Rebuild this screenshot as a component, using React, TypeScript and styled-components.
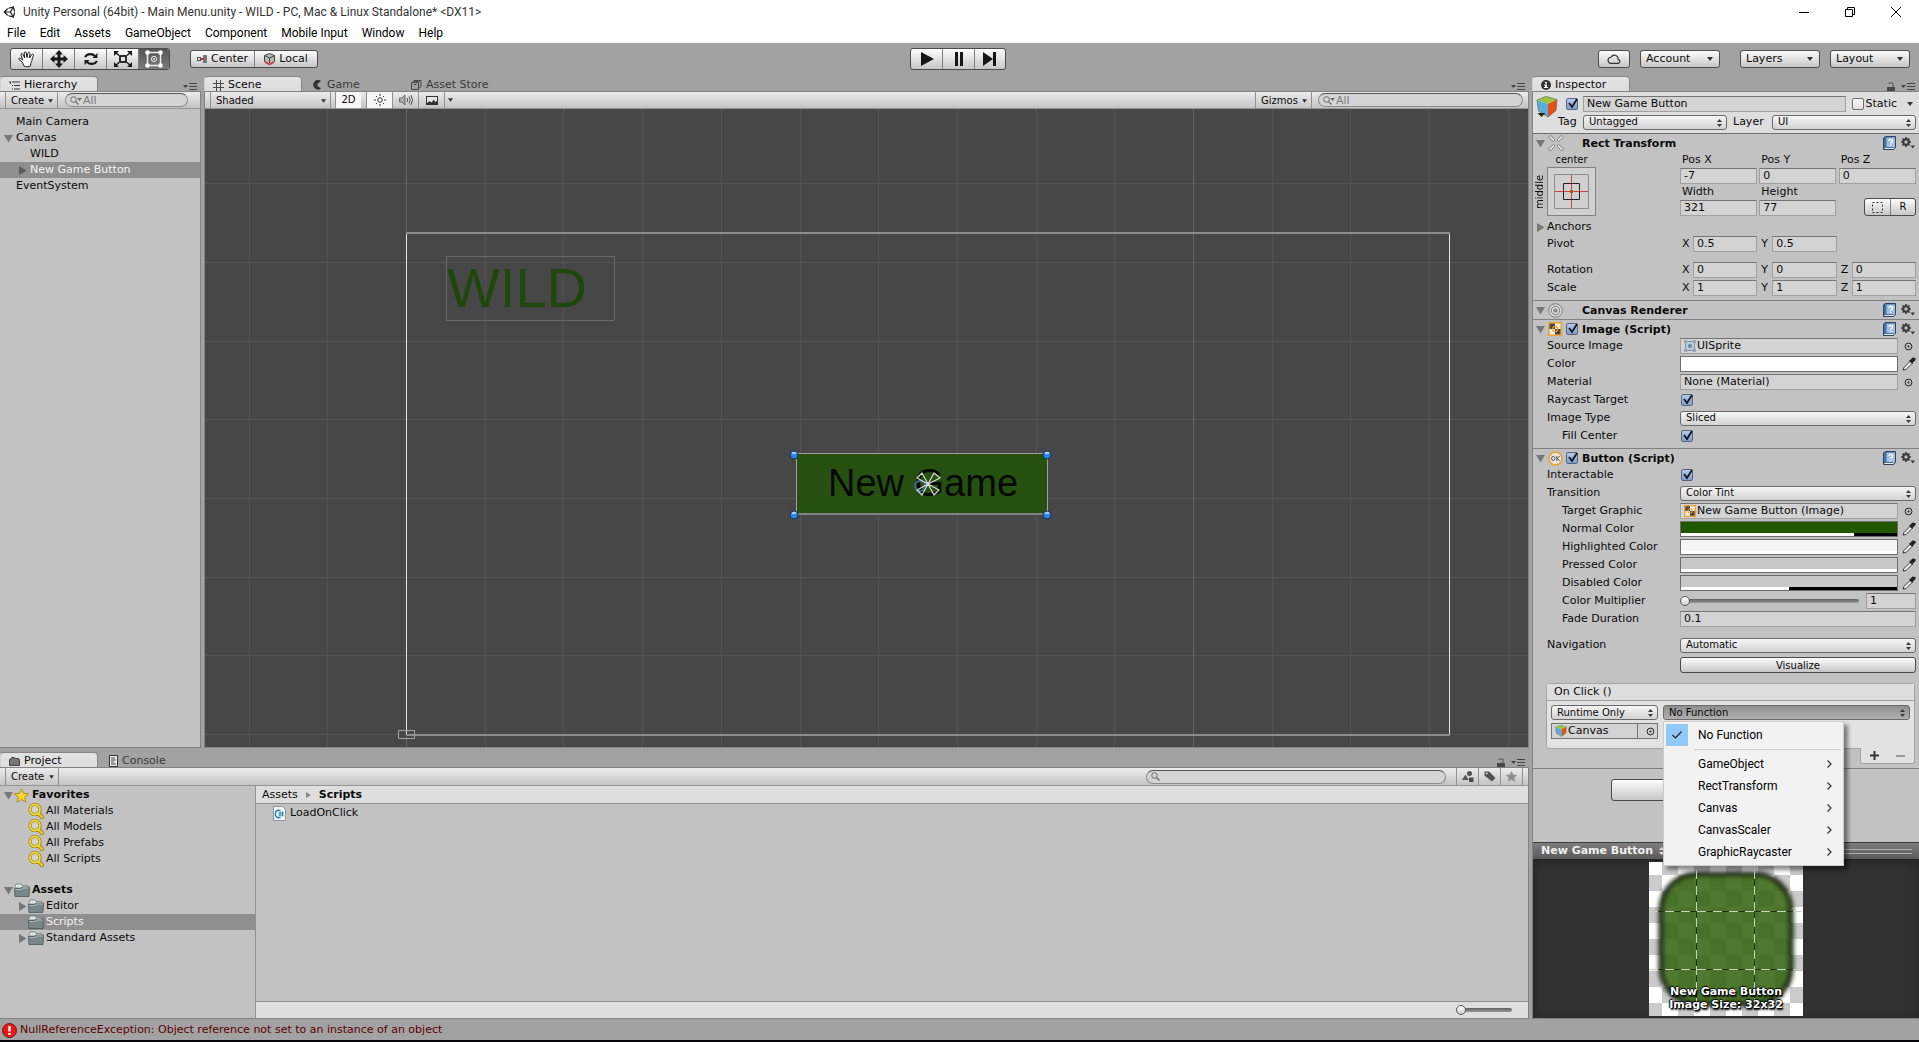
import React, { useState } from 'react';
import styled, { createGlobalStyle, css } from 'styled-components';
import { FaUnity } from 'react-icons/fa';

const line = '#828282';
const chrome = '#a2a2a2';
const panel = '#c2c2c2';
const bright = '#dedede';
const selected = '#8f8f8f';

const GlobalStyle = createGlobalStyle`
  * { box-sizing: border-box; }
  body {
    margin: 0;
    background: ${chrome};
    color: #0a0a0a;
    font-family: "DejaVu Sans", Verdana, sans-serif;
    font-size: 11px;
    line-height: 16px;
    overflow: hidden;
  }
  button, input, select { font: inherit; color: inherit; margin: 0; }
  button { padding: 0; border: 0; background: none; }
  ul { list-style: none; margin: 0; padding: 0; }
  svg { display: block; flex: none; }
`;

const Shell = styled.div`
  display: flex;
  flex-direction: column;
  height: 100vh;
`;

/* ---------- window chrome ---------- */

const TitleBar = styled.header`
  display: flex;
  align-items: center;
  height: 24px;
  padding-left: 3px;
  gap: 6px;
  background: #fff;
  font: 12px/16px Roboto, "Segoe UI", sans-serif;
  color: #333;
`;
const WindowButtons = styled.div`
  display: flex;
  margin-left: auto;
`;
const WindowButton = styled.button`
  width: 46px;
  height: 20px;
  display: grid;
  place-items: center;
`;
const MenuBar = styled.nav`
  display: flex;
  align-items: center;
  height: 19px;
  padding-left: 7px;
  gap: 14px;
  background: #fff;
  border-bottom: 1px solid #f0f0f0;
  button {
    font: 12px/16px Roboto, "Segoe UI", sans-serif;
    color: #000;
  }
`;

const raised = css`
  background: linear-gradient(#fdfdfd, #c6c6c6);
  border: 1px solid #4c4c4c;
  border-radius: 3px;
`;
const MainToolbar = styled.div`
  display: grid;
  grid-template-columns: 1fr auto 1fr;
  height: 33px;
  padding: 5px 9px 0 10px;
`;
const ToolGroup = styled.div`
  display: flex;
  align-items: flex-start;
`;
const Playback = styled(ToolGroup)`
  padding-right: 4px;
`;
const Segments = styled.div<{ $h: number }>`
  display: flex;
  height: ${p => p.$h}px;
  overflow: hidden;
  ${raised}
`;
const Segment = styled.button<{ $w: number; $on?: boolean }>`
  width: ${p => p.$w}px;
  display: flex;
  align-items: center;
  justify-content: center;
  gap: 4px;
  ${p => p.$on && 'background: linear-gradient(#555, #7b7b7b);'}
  & + & { border-left: 1px solid #808080; }
`;
const HandleModes = styled(Segments)`
  margin: 2px 0 0 20px;
`;
const RightTools = styled.div`
  display: flex;
  justify-content: flex-end;
  align-items: flex-start;
  padding-top: 2px;
`;
const CloudButton = styled.button`
  width: 32px;
  height: 18px;
  display: grid;
  place-items: center;
  margin-right: 10px;
  ${raised}
`;
const MenuButton = styled.button<{ $gap?: number }>`
  width: 80px;
  height: 18px;
  display: flex;
  align-items: center;
  justify-content: space-between;
  padding: 0 6px 0 5px;
  margin-right: ${p => p.$gap ?? 0}px;
  ${raised}
`;

/* ---------- docked panels ---------- */

const Workspace = styled.main`
  flex: 1;
  min-height: 0;
  display: grid;
  grid-template-columns: minmax(0, 1fr) 387px;
  column-gap: 3px;
`;
const LeftSide = styled.div`
  display: flex;
  flex-direction: column;
  gap: 4px;
  min-height: 0;
`;
const UpperDock = styled.div`
  flex: 1;
  min-height: 0;
  display: grid;
  grid-template-columns: 201px minmax(0, 1fr);
  column-gap: 3px;
`;
const Dock = styled.section<{ $h?: number }>`
  display: flex;
  flex-direction: column;
  min-height: 0;
  ${p => p.$h && `height: ${p.$h}px;`}
`;
const TabBar = styled.div`
  display: flex;
  height: 15px;
  flex: none;
`;
const Tab = styled.button<{ $on?: boolean }>`
  width: 98px;
  height: 15px;
  display: flex;
  align-items: center;
  gap: 4px;
  padding: 2px 0 0 ${p => (p.$on ? 8 : 11)}px;
  white-space: nowrap;
  color: ${p => (p.$on ? '#0a0a0a' : '#3a3a3a')};
  ${p =>
    p.$on &&
    `background: linear-gradient(#e2e2e2, #dedede);
     border: 1px solid #868686; border-bottom: 0; border-left-color: #d0d0d0;
     border-radius: 4px 4px 0 0;`}
`;
const TabTools = styled.div`
  display: flex;
  align-items: center;
  gap: 6px;
  margin-left: auto;
  padding: 6px 4px 0 0;
`;
const Frame = styled.div<{ $left?: boolean; $right?: boolean }>`
  flex: 1;
  min-height: 0;
  display: flex;
  flex-direction: column;
  background: ${panel};
  border: 0 solid ${line};
  border-top-width: 1px;
  border-left-width: ${p => (p.$left ? 1 : 0)}px;
  border-right-width: ${p => (p.$right ? 1 : 0)}px;
  border-bottom-width: 1px;
`;
const Toolbar = styled.div<{ $h: number }>`
  display: flex;
  align-items: stretch;
  flex: none;
  height: ${p => p.$h}px;
  padding-left: 5px;
  background: linear-gradient(#ececec, #c4c4c4);
  border-bottom: 1px solid #969696;
  font-size: 10px;
`;
const ToolItem = styled.button<{ $w: number; $on?: boolean; $first?: boolean }>`
  width: ${p => p.$w}px;
  display: flex;
  align-items: center;
  justify-content: ${p => (p.$first ? 'space-between' : 'center')};
  padding: ${p => (p.$first ? '1px 4px 0 5px' : '0')};
  border-left: 1px solid #909090;
  border-right: ${p => (p.$first ? 1 : 0)}px solid #909090;
  ${p => p.$on && 'background: #f6f6f6;'}
`;
const Gap = styled.span<{ $w?: number }>`
  ${p => (p.$w ? `width: ${p.$w}px;` : 'flex: 1;')}
`;
const SearchBox = styled.label<{ $w: number; $h: number }>`
  width: ${p => p.$w}px;
  height: ${p => p.$h}px;
  align-self: center;
  display: flex;
  align-items: center;
  gap: 1px;
  padding: 0 5px 0 4px;
  border: 1px solid #8c8c8c;
  border-top-color: #555;
  border-radius: 8px;
  background: #d4d4d4;
  input {
    min-width: 0;
    flex: 1;
    height: 100%;
    border: 0;
    padding: 0;
    outline: 0;
    background: none;
    font-size: 11px;
    color: #7c7c7c;
  }
  input::placeholder { color: #7c7c7c; opacity: 1; }
`;

/* ---------- trees ---------- */

const Tree = styled.ul<{ $top: number }>`
  padding-top: ${p => p.$top}px;
`;
const Node = styled.li<{ $depth: number; $on?: boolean; $bold?: boolean; $space?: boolean }>`
  display: flex;
  align-items: center;
  height: 16px;
  padding-left: ${p => 4 + p.$depth * 14}px;
  margin-top: ${p => (p.$space ? 15 : 0)}px;
  background: ${p => (p.$on ? selected : 'none')};
  color: ${p => (p.$on ? '#f4f4f4' : '#0a0a0a')};
  font-weight: ${p => (p.$bold ? 700 : 400)};
  white-space: nowrap;
`;
const Fold = styled.span`
  width: 10px;
  flex: none;
`;
const NodeText = styled.span<{ $gap: number }>`
  padding-left: ${p => p.$gap}px;
`;

/* ---------- scene ---------- */

const SceneView = styled.div`
  position: relative;
  flex: 1;
  min-height: 0;
  overflow: hidden;
  background: #474747;
`;
const SceneDrawing = styled.svg`
  position: absolute;
  inset: 0;
  width: 100%;
  height: 100%;
`;
const SceneText = styled.div<{ $x: number; $y: number; $w: number; $h: number; $size: number; $color: string; $center?: boolean }>`
  position: absolute;
  left: ${p => p.$x}px;
  top: ${p => p.$y}px;
  width: ${p => p.$w}px;
  height: ${p => p.$h}px;
  font: ${p => p.$size}px/${p => p.$h}px "Liberation Sans", Arial, sans-serif;
  color: ${p => p.$color};
  text-align: ${p => (p.$center ? 'center' : 'left')};
`;

/* ---------- project ---------- */

const ProjectBody = styled.div`
  flex: 1;
  min-height: 0;
  display: grid;
  grid-template-columns: 256px minmax(0, 1fr);
`;
const ProjectTree = styled.div`
  border-right: 1px solid #909090;
`;
const ProjectFiles = styled.div`
  display: flex;
  flex-direction: column;
`;
const Breadcrumb = styled.div`
  display: flex;
  align-items: center;
  gap: 8px;
  height: 18px;
  padding-left: 6px;
  background: ${bright};
  border-bottom: 1px solid #909090;
`;
const FileRow = styled.div`
  display: flex;
  align-items: center;
  gap: 4px;
  height: 18px;
  padding-left: 17px;
`;
const SizeBar = styled.div`
  display: flex;
  align-items: center;
  justify-content: flex-end;
  height: 17px;
  margin-top: auto;
  padding-right: 16px;
  background: ${bright};
  border-top: 1px solid #909090;
`;
const Slider = styled.input<{ $w?: number }>`
  appearance: none;
  height: 12px;
  ${p => (p.$w ? `width: ${p.$w}px;` : 'flex: 1; min-width: 0;')}
  background: none;
  &::-webkit-slider-runnable-track {
    height: 4px;
    border-radius: 2px;
    background: linear-gradient(#606060, #9a9a9a);
  }
  &::-webkit-slider-thumb {
    appearance: none;
    width: 10px;
    height: 10px;
    margin-top: -3px;
    border-radius: 50%;
    border: 1px solid #5c5c5c;
    background: linear-gradient(#fff, #cfcfcf);
  }
`;

/* ---------- inspector ---------- */

const ObjectHeader = styled.div`
  display: flex;
  height: 42px;
  padding: 4px 3px 0 3px;
  background: ${bright};
  border-bottom: 1px solid #707070;
`;
const ObjectLines = styled.div`
  flex: 1;
  display: flex;
  flex-direction: column;
  gap: 2px;
`;
const ObjectLine = styled.div<{ $pad: number }>`
  display: flex;
  align-items: center;
  height: 16px;
  padding-left: ${p => p.$pad}px;
`;
const TagLabel = styled.label<{ $w: number }>`
  width: ${p => p.$w}px;
`;
const StaticLabel = styled.label`
  display: flex;
  align-items: center;
  gap: 1px;
  margin: 0 9px 0 6px;
`;
const Component = styled.section<{ $pad?: number }>`
  border-bottom: 1px solid #808080;
  padding-bottom: ${p => p.$pad ?? 0}px;
`;
const ComponentHead = styled.h2`
  display: flex;
  align-items: center;
  height: 18px;
  margin: 0;
  padding: 0 4px 0 3px;
  font-size: 11px;
  line-height: 16px;
`;
const AnchorsFold = styled.div`
  display: flex;
  align-items: center;
  gap: 1px;
  height: 18px;
  padding-left: 3px;
`;
const HeadIcon = styled.span`
  width: 19px;
  padding-left: 2px;
`;
const HeadCheck = styled.span`
  width: 16px;
`;
const HeadName = styled.span`
  flex: 1;
  padding-top: 2px;
`;
const Row = styled.div<{ $mt?: number }>`
  display: grid;
  grid-template-columns: 147px minmax(0, 1fr);
  height: 16px;
  margin: ${p => p.$mt ?? 0}px 3px 2px 0;
`;
const RowLabel = styled.label<{ $indent?: boolean }>`
  padding-left: ${p => (p.$indent ? 29 : 14)}px;
`;
const RowField = styled.div`
  display: flex;
  align-items: center;
  gap: 3px;
`;
const fieldLook = css`
  height: 16px;
  min-width: 0;
  padding: 0 3px;
  border: 1px solid #a0a0a0;
  border-top-color: #747474;
  border-radius: 0;
  background: #d3d3d3;
  outline: 0;
`;
const TextField = styled.input<{ $w?: number }>`
  ${fieldLook}
  ${p => (p.$w ? `width: ${p.$w}px;` : 'flex: 1; width: 0;')}
`;
const ObjectField = styled.button`
  ${fieldLook}
  flex: 1;
  display: flex;
  align-items: center;
  gap: 1px;
  line-height: 14px;
`;
const PickButton = styled.button`
  width: 15px;
  display: grid;
  place-items: center;
`;
const Swatch = styled.button<{ $color: string; $alpha: number }>`
  flex: 1;
  height: 16px;
  border: 1px solid #6c6c6c;
  background:
    linear-gradient(90deg, #fff ${p => p.$alpha}%, #000 ${p => p.$alpha}%) bottom / 100% 3px no-repeat,
    ${p => p.$color};
`;
const SelectWrap = styled.span<{ $w?: number }>`
  position: relative;
  display: flex;
  ${p => (p.$w ? `width: ${p.$w}px;` : 'flex: 1;')}
  svg { position: absolute; right: 5px; top: 4px; pointer-events: none; }
`;
const SelectBox = styled.select<{ $dark?: boolean }>`
  appearance: none;
  width: 100%;
  height: 15px;
  padding: 0 14px 0 5px;
  border: 1px solid #6a6a6a;
  border-radius: 3px;
  background: ${p => (p.$dark ? 'linear-gradient(#8f8f8f, #b0b0b0)' : 'linear-gradient(#f6f6f6, #d2d2d2)')};
  font-size: 10px;
  line-height: 12px;
`;
const CheckWrap = styled.span`
  position: relative;
  display: block;
  width: 13px;
  height: 13px;
  svg { position: absolute; left: 1px; top: 0; pointer-events: none; }
`;
const CheckInput = styled.input`
  appearance: none;
  display: block;
  width: 12px;
  height: 12px;
  border: 1px solid #6c6c6c;
  border-radius: 2px;
  background: linear-gradient(#f8f8f8, #e0e0e0);
  &:checked { background: linear-gradient(#b4caea, #7f9ccf); border-color: #56647c; }
`;
const CheckField = styled(RowField)`
  padding-left: 1px;
`;
const FullButton = styled.button`
  flex: 1;
  height: 16px;
  font-size: 10px;
  ${raised}
`;
const RectBody = styled.div`
  display: grid;
  grid-template-columns: 147px minmax(0, 1fr);
  height: 64px;
  margin: 0 3px 2px 0;
`;
const AnchorPreset = styled.div`
  display: grid;
  grid-template-columns: 14px 49px;
  grid-template-rows: 15px 49px;
  font-size: 10px;
`;
const AnchorTop = styled.span`
  grid-column: 2;
  text-align: center;
`;
const AnchorSide = styled.span`
  writing-mode: vertical-rl;
  rotate: 180deg;
  text-align: center;
  line-height: 14px;
`;
const AnchorButton = styled.button`
  width: 49px;
  height: 49px;
`;
const RectGrid = styled.div`
  display: grid;
  grid-template-columns: repeat(3, 1fr);
  grid-template-rows: repeat(4, 16px);
  column-gap: 2px;
  label { padding-left: 2px; }
`;
const RectButtons = styled(Segments)`
  grid-column: 3;
  grid-row: 4;
  width: 52px;
  height: 18px;
  align-self: end;
  justify-self: end;
  font-size: 10px;
`;
const Axis = styled.label`
  flex: 1;
  display: flex;
  align-items: center;
  padding-left: 2px;
  span { width: 11px; }
`;
const Axes = styled.div`
  display: grid;
  grid-template-columns: repeat(3, 1fr);
  column-gap: 2px;
`;
const EventBox = styled.div`
  position: relative;
  margin: 10px 4px 19px 13px;
  border: 1px solid #a4a4a4;
  border-radius: 3px 3px 0 3px;
  background: #e2e2e2;
`;
const EventTitle = styled.div`
  height: 17px;
  padding-left: 7px;
  border-bottom: 1px solid #a0a0a0;
  background: #dedede;
`;
const EventBody = styled.div`
  display: grid;
  grid-template-columns: 107px minmax(0, 1fr);
  column-gap: 5px;
  row-gap: 3px;
  height: 47px;
  padding: 4px 4px 0 4px;
  align-content: start;
`;
const EventFooter = styled.div`
  position: absolute;
  right: -1px;
  top: 100%;
  width: 55px;
  height: 16px;
  display: flex;
  justify-content: space-around;
  align-items: center;
  border: 1px solid #a4a4a4;
  border-top: 0;
  border-radius: 0 0 3px 3px;
  background: #e2e2e2;
`;
const PopupAnchor = styled.div`
  position: relative;
  display: flex;
  height: 15px;
`;
const Popup = styled.div`
  position: absolute;
  z-index: 3;
  left: 0;
  top: 16px;
  width: 181px;
  padding: 2px;
  border: 1px solid #ccc;
  background: #f2f2f2;
  box-shadow: 4px 4px 4px rgba(0, 0, 0, 0.45);
`;
const PopupItem = styled.button`
  width: 100%;
  height: 22px;
  display: grid;
  grid-template-columns: 22px 1fr 14px;
  column-gap: 10px;
  align-items: center;
  text-align: left;
  font: 12px/16px Roboto, "Segoe UI", sans-serif;
  color: #000;
`;
const PopupTick = styled.span`
  width: 22px;
  height: 22px;
  display: grid;
  place-items: center;
  background: #90c8f6;
`;
const PopupRule = styled.div`
  height: 1px;
  margin: 3px 0 3px 28px;
  background: #d0d0d0;
`;
const AddComponent = styled.button`
  display: block;
  width: 230px;
  height: 22px;
  margin: 10px auto 0;
  ${raised}
`;
const PreviewHead = styled.div`
  display: flex;
  align-items: center;
  gap: 6px;
  height: 17px;
  margin-top: auto;
  padding: 0 7px 0 8px;
  border-top: 1px solid #3c3c3c;
  background: linear-gradient(#7e7e7e, #5a5a5a);
  color: #f0f0f0;
  font-weight: 700;
  white-space: nowrap;
`;
const DragLines = styled.span`
  flex: 1;
  height: 5px;
  border: 1px solid #b0b0b0;
  border-width: 1px 0;
`;
const Preview = styled.div`
  display: flex;
  justify-content: center;
  height: 159px;
  padding-top: 3px;
  background: #313131;
  box-shadow: inset 0 2px 8px #222;
`;
const Sprite = styled.figure`
  position: relative;
  width: 154px;
  height: 154px;
  margin: 0;
`;
const SpriteCaption = styled.figcaption`
  position: absolute;
  left: -10px;
  right: -10px;
  bottom: 5px;
  text-align: center;
  line-height: 13px;
  font-weight: 700;
  color: #fff;
  text-shadow: 1px 1px 1px #000, -1px 0 1px #000, 0 -1px 1px #000, 1px 2px 2px #000;
`;
const StatusBar = styled.footer`
  display: flex;
  align-items: center;
  gap: 3px;
  height: 23px;
  padding: 1px 0 0 2px;
  border-bottom: 2px solid #05060a;
  color: #5e0000;
  flex: none;
`;
const TargetField = styled.button`
  height: 16px;
  display: flex;
  align-items: center;
  gap: 1px;
  padding: 0 0 0 3px;
  border: 1px solid #747474;
  background: #d3d3d3;
  line-height: 14px;
  span {
    flex: 1;
    text-align: left;
    border-right: 1px solid #747474;
    margin-right: 7px;
  }
  svg:last-child { margin-right: 2px; }
`;

/* ---------- icons ---------- */

const Triangle = ({ open, color = '#777' }: { open?: boolean; color?: string }) => (
  <svg width="9" height="9" viewBox="0 0 9 9">
    <path d={open ? 'M0 1h9L4.500 8.500z' : 'M1 0v9l7.500-4.500z'} fill={color} />
  </svg>
);
const Caret = ({ w = 5, color = '#333' }: { w?: number; color?: string }) => (
  <svg width={w} height="4" viewBox="0 0 6 4"><path d="M0 0h6L3 4z" fill={color} /></svg>
);
const UpDown = ({ color = '#3a3a3a' }: { color?: string }) => (
  <svg width="5" height="8" viewBox="0 0 5 8"><path d="M0 3h5L2.500 0zM0 5h5L2.500 8z" fill={color} /></svg>
);
const PanelMenu = () => (
  <svg width="14" height="7" viewBox="0 0 14 7">
    <path d="M0 2h5L2.500 5zM6 0h8v1H6zM6 3h8v1H6zM6 6h8v1H6z" fill="#444" />
  </svg>
);
const Lock = () => (
  <svg width="8" height="10" viewBox="0 0 8 10">
    <path d="M2 2V1h4v4" fill="none" stroke="#555" />
    <path d="M0 5h8v5H0z" fill="#484848" />
  </svg>
);
const SearchIcon = ({ drop }: { drop?: boolean }) => (
  <svg width={drop ? 12 : 9} height="9" viewBox={drop ? '0 0 12 9' : '0 0 9 9'}>
    <circle cx="3.500" cy="3.500" r="2.800" fill="none" stroke="#6c6c6c" />
    <path d="M5.500 5.500L8.500 8.500" stroke="#6c6c6c" strokeWidth="1.300" />
    {drop && <path d="M7 2h5L9.500 5z" fill="#6c6c6c" />}
  </svg>
);
const HandIcon = () => (
  <svg width="18" height="18" viewBox="0 0 18 18">
    <path d="M6 16L4.500 12.500 1 9.500c-.6-1.300.9-1.800 1.800-1l2 1.600L3 5c-.4-1.500 1.400-1.900 1.900-.6L6.600 8 6.200 3c0-1.500 1.900-1.500 2.100 0L9 7.600l.9-4.400c.4-1.300 2.100-1 2 .5L11.600 8l1.900-3.300c.8-1.200 2.300-.4 1.800.9-1.300 3.200-1 5-2.600 7.900L12.500 16c-2 1-4.500 1-6.500 0z"
      fill="#fff" stroke="#222" strokeWidth="1" strokeLinejoin="round" />
  </svg>
);
const MoveIcon = () => (
  <svg width="18" height="18" viewBox="0 0 18 18">
    <path d="M9 0l4 4.500h-2.500v3h3V5L18 9l-4.500 4v-2.500h-3v3H13L9 18l-4-4.500h2.500v-3h-3V13L0 9l4.500-4v2.500h3v-3H5z" fill="#1a1a1a" />
  </svg>
);
const RotateIcon = () => (
  <svg width="16" height="16" viewBox="0 0 16 16">
    <path d="M2 6C4 2.500 9 2 12 5M14 10c-2 3.500-7 4-10 1" fill="none" stroke="#1a1a1a" strokeWidth="2.200" />
    <path d="M14.500 2v5H9.500zM1.500 14V9h5z" fill="#1a1a1a" />
  </svg>
);
const ScaleIcon = () => (
  <svg width="18" height="16" viewBox="0 0 18 16">
    <rect x="6" y="5" width="6" height="6" fill="none" stroke="#1a1a1a" strokeWidth="1.800" />
    <path d="M1 1l4 3.500M17 1l-4 3.500M1 15l4-3.500M17 15l-4-3.500" stroke="#1a1a1a" strokeWidth="1.500" />
    <path d="M0 0h5L0 5zM18 0h-5l5 5zM0 16h5l-5-5zM18 16h-5l5-5z" fill="#1a1a1a" />
  </svg>
);
const RectIcon = () => (
  <svg width="18" height="18" viewBox="0 0 18 18">
    <rect x="2.500" y="2.500" width="13" height="13" fill="none" stroke="#eee" strokeWidth="1.500" />
    <circle cx="9" cy="9" r="2.600" fill="none" stroke="#eee" />
    <circle cx="9" cy="9" r=".9" fill="#eee" />
    {[2.5, 15.5].map(x => [2.5, 15.5].map(y => <circle key={`${x}${y}`} cx={x} cy={y} r="2.300" fill="#fff" />))}
  </svg>
);
const PivotIcon = () => (
  <svg width="10" height="8" viewBox="0 0 10 8">
    <path d="M0 2h4v4H0z" fill="#555" /><path d="M1 3h2v2H1z" fill="#ddd" />
    <path d="M6 0h4v8H6z" fill="#777" /><path d="M4 3h3v2H4z" fill="#c22d3a" />
  </svg>
);
const LocalIcon = () => (
  <svg width="11" height="12" viewBox="0 0 11 12">
    <path d="M5.500.5l5 2v6l-5 3-5-3v-6z" fill="#b8b8b8" stroke="#444" />
    <path d="M.5 2.500l5 2.500 5-2.500M5.500 5v5" fill="none" stroke="#444" />
    <path d="M1 9l4.500 2.500L10 9" fill="none" stroke="#cc3344" strokeWidth="1.500" />
  </svg>
);
const PlayIcon = ({ kind }: { kind: 'play' | 'pause' | 'step' }) => (
  <svg width="16" height="14" viewBox="0 0 16 14">
    <path
      d={kind === 'play' ? 'M2 0l13 7-13 7z' : kind === 'pause' ? 'M4 0h3v14H4zM9 0h3v14H9z' : 'M1 0l10 7-10 7zM11 0h3v14h-3z'}
      fill="#161616"
    />
  </svg>
);
const CloudIcon = () => (
  <svg width="14" height="10" viewBox="0 0 14 10">
    <path d="M3 9.300h8.200c2.300-.4 2.400-3.300 0-3.600C11.300 1 6-.5 4.400 3 1 3-.3 7.500 3 9.300z" fill="none" stroke="#333" strokeWidth="1.200" />
  </svg>
);
const HierarchyIcon = () => (
  <svg width="11" height="9" viewBox="0 0 11 9">
    <path d="M0 1h2M3 1h8M3 4.500h1M5 4.500h6M3 8h1M5 8h6M1.500 1v2" stroke="#333" />
  </svg>
);
const GridIcon = () => (
  <svg width="11" height="11" viewBox="0 0 11 11">
    <path d="M0 3.500h11M0 7.500h11M3.500 0v11M7.500 0v11" stroke="#4a4a4a" />
  </svg>
);
const GameIcon = () => (
  <svg width="10" height="10" viewBox="0 0 10 10"><path d="M8 1A4.800 4.800 0 1 0 8 8.600L4.500 6V4z" fill="#333" /></svg>
);
const StoreIcon = () => (
  <svg width="11" height="11" viewBox="0 0 11 11">
    <path d="M.5 3.500h7v7h-7zM2 3.500l1-2h7v6l-2.500 2M2.500 5.500h3" fill="none" stroke="#444" />
    <path d="M3 1.500h7L7.500 3.500H1z" fill="#555" />
  </svg>
);
const InfoIcon = () => (
  <svg width="10" height="10" viewBox="0 0 10 10">
    <circle cx="5" cy="5" r="5" fill="#333" />
    <path d="M4 2h2v1.500H4zM4 4.500h2V7h1v1H3V7h1V5.500H3v-1z" fill="#fff" />
  </svg>
);
const FolderTab = () => (
  <svg width="11" height="9" viewBox="0 0 11 9">
    <path d="M.5 2.500h1l1-2h3l1 1h3v1h1v6H.5z" fill="#777" stroke="#444" />
  </svg>
);
const ConsoleIcon = () => (
  <svg width="9" height="12" viewBox="0 0 9 12">
    <path d="M.5.5h8v11h-8z" fill="#ececec" stroke="#333" />
    <path d="M2 3h4M2 5h5M2 7h3M2 9h5" stroke="#444" />
  </svg>
);
const SunIcon = () => (
  <svg width="12" height="12" viewBox="0 0 12 12" fill="none" stroke="#333">
    <circle cx="6" cy="6" r="2.300" />
    <path d="M6 0v2M6 10v2M0 6h2M10 6h2M2 2l1 1M9 9l1 1M10 2L9 3M3 9l-1 1" />
  </svg>
);
const SoundIcon = () => (
  <svg width="14" height="12" viewBox="0 0 14 12">
    <path d="M.5 4h2.500l3-3v10L3 8H.5z" fill="#aaa" stroke="#555" strokeWidth=".8" />
    <path d="M8 4q1.500 2 0 4M10 2.500q2.500 3.500 0 7M12 1q3 5 0 10" fill="none" stroke="#555" />
  </svg>
);
const PictureIcon = () => (
  <svg width="12" height="9" viewBox="0 0 12 9">
    <path d="M0 0h12v9H0z" fill="#333" /><path d="M1 1h10v4L9 6 8 3.500 5.500 6.500 3.500 5 1 7z" fill="#e8e8e8" />
  </svg>
);
const StarIcon = ({ gold }: { gold?: boolean }) => (
  <svg width={gold ? 15 : 11} height={gold ? 15 : 11} viewBox="0 0 15 15">
    <path d="M7.500.8l2 4.600 5 .4-3.800 3.300 1.200 5-4.400-2.700-4.400 2.700 1.200-5L.5 5.800l5-.4z"
      fill={gold ? '#fbd92a' : '#8e8e8e'} stroke={gold ? '#a8861c' : '#8e8e8e'} strokeWidth=".9" strokeLinejoin="round" />
  </svg>
);
const Magnifier = () => (
  <svg width="16" height="16" viewBox="0 0 16 16">
    <path d="M10 10l4 4" stroke="#97801c" strokeWidth="4" strokeLinecap="round" />
    <circle cx="7" cy="6.500" r="5" fill="#d2d2cc" stroke="#97801c" strokeWidth="3.200" />
    <path d="M10.500 10.500l3.500 3.500" stroke="#f2cf2c" strokeWidth="2.400" strokeLinecap="round" />
    <circle cx="7" cy="6.500" r="5" fill="none" stroke="#f5d738" strokeWidth="1.800" />
  </svg>
);
const Folder = () => (
  <svg width="16" height="14" viewBox="0 0 16 14">
    <path d="M1 3.500L2 1h5l1 1.500h5.500V5H1z" fill="#dfe4e4" stroke="#737c7c" strokeWidth=".8" />
    <path d="M.5 5.500h6L8 4h7.500L15 13.500H1z" fill="#7a8787" stroke="#4b5656" strokeWidth=".8" />
    <path d="M1.200 6.500h6L8.500 5h6.300" stroke="#b4bfbf" fill="none" />
  </svg>
);
const CSharpIcon = () => (
  <svg width="13" height="15" viewBox="0 0 13 15">
    <path d="M.5.5h9l3 3v11H.5z" fill="#f2f6f8" stroke="#8a949a" />
    <path d="M7.500 4.700C4.500 3.500 2.300 5.500 2.300 8s2.200 4.500 5.200 3.300" fill="none" stroke="#1b83b4" strokeWidth="1.500" />
    <path d="M7 5.500v5M9.500 5.500v5M5.500 7h5.500M5.500 9h5.500" stroke="#1b83b4" strokeWidth=".9" />
  </svg>
);
const ShapesIcon = () => (
  <svg width="12" height="11" viewBox="0 0 12 11">
    <circle cx="7.500" cy="2.500" r="2.500" fill="#555" /><path d="M3.500 3.500l3.200 5.500H0z" fill="#555" />
    <path d="M7 6.500h4.500V11H7z" fill="#4a4a4a" />
  </svg>
);
const TagIcon = () => (
  <svg width="12" height="11" viewBox="0 0 12 11">
    <path d="M.5.5h4.500L11.500 7 8 10.500.5 4.500z" fill="#505050" /><circle cx="2.700" cy="2.500" r="1" fill="#ddd" />
  </svg>
);
const Cube = ({ size }: { size: number }) => (
  <svg width={size} height={size} viewBox="0 0 22 22">
    <path d="M1 4L10 .5 21 3.500 12 8z" fill="#9cc63c" />
    <path d="M1 4l11 4v13L2.500 15z" fill="#5aaede" />
    <path d="M21 3.500L12 8v13l8-6.500z" fill="#e2501c" />
    <path d="M1 4L10 .5 21 3.500 20 14.500 12 21 2.500 15z" fill="none" stroke="#5b6c4c" strokeWidth=".7" />
    {size > 16 && <path d="M1.500 17h8l-4 4z" fill="#222" />}
  </svg>
);
const BookIcon = () => (
  <svg width="13" height="14" viewBox="0 0 13 14">
    <path d="M.5 2L2.500.5h10v11l-2 2H.5z" fill="#476f9f" stroke="#2a4463" />
    <path d="M3.500 1.500h8.500v9.500H3.500z" fill="#a3bfdd" />
    <path d="M6 5c0-2.300 3.600-2.300 3.600 0 0 1.300-1.800 1.300-1.800 2.500M7.800 8.500v1.200" fill="none" stroke="#fff" strokeWidth="1.200" />
    <path d="M1.500 12.500H10L11.500 11.500" stroke="#e8eef5" fill="none" />
  </svg>
);
const GearIcon = () => (
  <svg width="14" height="12" viewBox="0 0 14 12">
    <circle cx="5" cy="5" r="2.700" fill="none" stroke="#3a3a3a" strokeWidth="2" />
    <path d="M5 0v2M5 8v2M0 5h2M8 5h2M1.500 1.500L3 3M7 7l1.500 1.500M8.500 1.500L7 3M3 7L1.500 8.500" stroke="#3a3a3a" strokeWidth="1.700" />
    <path d="M9.500 8.500H14L11.800 11.500z" fill="#3a3a3a" />
  </svg>
);
const TransformIcon = () => (
  <svg width="16" height="16" viewBox="0 0 16 16" fill="#e0e0e0" stroke="#7a7a7a" strokeWidth=".9" strokeLinejoin="round">
    <path d="M.5 2.500Q1 .8 3 .5L6.500 4.500V6L5.500 6.500zM15.500 2.500Q15 .8 13 .5L9.500 4.500V6l1 .5zM.5 13.500q.5 1.700 2.500 2l3.500-4V10l-1-.5zM15.500 13.500q-.5 1.700-2.500 2l-3.500-4V10l1-.5z" />
  </svg>
);
const TargetIcon = () => (
  <svg width="15" height="15" viewBox="0 0 15 15" fill="none" stroke="#7c7c7c">
    <circle cx="7.500" cy="7.500" r="6.800" fill="#d8d8d8" /><circle cx="7.500" cy="7.500" r="4.200" /><circle cx="7.500" cy="7.500" r="1.600" fill="#888" />
  </svg>
);
const ImageIcon = ({ size = 14 }: { size?: number }) => (
  <svg width={size} height={size} viewBox="0 0 14 14">
    <path d="M.8.8h12.400v12.400H.8z" fill="#ececec" stroke="#f0a126" strokeWidth="1.500" />
    <path d="M1.500 1.500H7V7H1.500zM7 7h5.500v5.500H7z" fill="#4c4640" />
    <circle cx="7" cy="7" r="2.600" fill="none" stroke="#f0a126" strokeWidth="1.200" />
  </svg>
);
const OkIcon = () => (
  <svg width="15" height="15" viewBox="0 0 15 15">
    <circle cx="7.500" cy="7.500" r="6.500" fill="#e6e6e6" stroke="#f0a126" strokeWidth="1.500" />
    <ellipse cx="5.200" cy="7.500" rx="1.700" ry="2" fill="none" stroke="#555" />
    <path d="M8.800 5v5M11.800 5.200L9.200 7.500l2.600 2.400" fill="none" stroke="#555" />
  </svg>
);
const SpriteIcon = () => (
  <svg width="12" height="12" viewBox="0 0 12 12">
    <path d="M1.500 1.500h9v9h-9z" fill="#b9cbd6" stroke="#7f95a4" />
    <path d="M0 0h3v3H0zM9 0h3v3H9zM0 9h3v3H0zM9 9h3v3H9z" fill="#93a9b7" /><circle cx="6" cy="6" r="2" fill="#5d8cab" />
  </svg>
);
const PickIcon = () => (
  <svg width="9" height="9" viewBox="0 0 9 9">
    <circle cx="4.500" cy="4.500" r="3.400" fill="none" stroke="#222" /><circle cx="4.500" cy="4.500" r="1" fill="#222" />
  </svg>
);
const Dropper = () => (
  <svg width="14" height="14" viewBox="0 0 14 14">
    <path d="M1 13l1-2.500 6-6 2 2-6 6z" fill="#f2f2f2" stroke="#222" strokeWidth=".9" />
    <path d="M7 3.500L8 3l2.500-2.500 3 .5v2L11 5.500l-.5 1.500z" fill="#222" />
  </svg>
);
const ErrorIcon = () => (
  <svg width="15" height="15" viewBox="0 0 15 15">
    <circle cx="7.500" cy="7.500" r="7" fill="#ee1512" stroke="#6e1a1a" />
    <path d="M6.300 3h2.400v5.500H6.300zM6.300 10h2.400v2H6.300z" fill="#fff" />
  </svg>
);

/* ---------- small controls ---------- */

const Check = ({ id, label, on = false }: { id?: string; label?: string; on?: boolean }) => {
  const [checked, setChecked] = useState(on);
  return (
    <CheckWrap>
      <CheckInput id={id} type="checkbox" aria-label={label} checked={checked} onChange={() => setChecked(!checked)} />
      {checked && (
        <svg width="12" height="11" viewBox="0 0 12 11"><path d="M2 5l3 4L10 1" fill="none" stroke="#10131c" strokeWidth="1.800" /></svg>
      )}
    </CheckWrap>
  );
};

const Dropdown = ({ id, label, value, w, dark }: { id?: string; label?: string; value: string; w?: number; dark?: boolean }) => (
  <SelectWrap $w={w}>
    <SelectBox id={id} aria-label={label} $dark={dark}><option>{value}</option></SelectBox>
    <UpDown />
  </SelectWrap>
);

const Head = ({ name, icon, check }: { name: string; icon: React.ReactNode; check?: boolean }) => (
  <ComponentHead>
    <Fold><Triangle open /></Fold>
    <HeadIcon>{icon}</HeadIcon>
    <Gap $w={1} />
    <HeadCheck>{check && <Check on label={`Enable ${name}`} />}</HeadCheck>
    <HeadName>{name}</HeadName>
    <BookIcon />
    <Gap $w={5} />
    <GearIcon />
  </ComponentHead>
);

type FieldProps = { id: string; label: string; indent?: boolean; mt?: number; children: React.ReactNode };
const Field = ({ id, label, indent, mt, children }: FieldProps) => (
  <Row $mt={mt}>
    <RowLabel htmlFor={id} $indent={indent}>{label}</RowLabel>
    <RowField>{children}</RowField>
  </Row>
);

const Toggle = ({ id, label, indent }: { id: string; label: string; indent?: boolean }) => (
  <Row>
    <RowLabel htmlFor={id} $indent={indent}>{label}</RowLabel>
    <CheckField><Check id={id} on /></CheckField>
  </Row>
);

const ColorField = ({ id, label, color, alpha = 100, indent = true }: { id: string; label: string; color: string; alpha?: number; indent?: boolean }) => (
  <Field id={id} label={label} indent={indent}>
    <Swatch id={id} $color={color} $alpha={alpha} />
    <PickButton aria-label={`Pick ${label}`}><Dropper /></PickButton>
  </Field>
);

const Vector = ({ label, values, mt }: { label: string; values: string[]; mt?: number }) => (
  <Row $mt={mt}>
    <RowLabel as="span">{label}</RowLabel>
    <Axes>
      {values.map((v, i) => (
        <Axis key={i}><span>{'XYZ'[i]}</span><TextField defaultValue={v} /></Axis>
      ))}
    </Axes>
  </Row>
);

/* ---------- views ---------- */

const Hierarchy = () => (
  <Dock>
    <TabBar>
      <Tab $on><HierarchyIcon />Hierarchy</Tab>
      <TabTools><PanelMenu /></TabTools>
    </TabBar>
    <Frame $right>
      <Toolbar $h={17}>
        <ToolItem $w={53} $first>Create<Caret /></ToolItem>
        <Gap $w={7} />
        <SearchBox $w={123} $h={14}><SearchIcon drop /><input aria-label="Search hierarchy" placeholder="All" /></SearchBox>
      </Toolbar>
      <Tree $top={5}>
        <Node $depth={0}><Fold /><NodeText $gap={2}>Main Camera</NodeText></Node>
        <Node $depth={0}><Fold><Triangle open /></Fold><NodeText $gap={2}>Canvas</NodeText></Node>
        <Node $depth={1}><Fold /><NodeText $gap={2}>WILD</NodeText></Node>
        <Node $depth={1} $on><Fold><Triangle color="#5c5c5c" /></Fold><NodeText $gap={2}>New Game Button</NodeText></Node>
        <Node $depth={0}><Fold /><NodeText $gap={2}>EventSystem</NodeText></Node>
      </Tree>
    </Frame>
  </Dock>
);

const columns = Array.from({ length: 17 }, (_, i) => i - 2);
const rows = Array.from({ length: 8 }, (_, i) => i);

const Scene = () => (
  <Dock>
    <TabBar>
      <Tab $on><GridIcon />Scene</Tab>
      <Tab><GameIcon />Game</Tab>
      <Tab><StoreIcon />Asset Store</Tab>
      <TabTools><PanelMenu /></TabTools>
    </TabBar>
    <Frame $left $right>
      <Toolbar $h={17}>
        <ToolItem $w={121} $first>Shaded<Caret /></ToolItem>
        <Gap $w={4} />
        <ToolItem $w={26} $on>2D</ToolItem>
        <Gap $w={5} />
        <ToolItem $w={26} $on aria-label="Lighting"><SunIcon /></ToolItem>
        <ToolItem $w={26} aria-label="Audio"><SoundIcon /></ToolItem>
        <ToolItem $w={26} aria-label="Effects"><PictureIcon /></ToolItem>
        <ToolItem $w={11} aria-label="Effect options"><Caret /></ToolItem>
        <Gap />
        <ToolItem $w={57} $first>Gizmos<Caret /></ToolItem>
        <Gap $w={6} />
        <SearchBox $w={205} $h={14}><SearchIcon drop /><input aria-label="Search scene" placeholder="All" /></SearchBox>
        <Gap $w={5} />
      </Toolbar>
      <SceneView>
        <SceneDrawing>
          {columns.map(n => {
            const x = Math.round(201 + n * 78.7) + 0.5;
            return <path key={n} d={`M${x} 0V2000`} stroke="#fff" opacity={n % 10 === 0 ? 0.16 : 0.06} />;
          })}
          {rows.map(n => {
            const y = Math.round(625 - n * 78.7) + 0.5;
            return <path key={n} d={`M0 ${y}H4000`} stroke="#fff" opacity="0.07" />;
          })}
          <path d="M201.500 124V626M1244.500 124V626" stroke="#e4e4e4" />
          <path d="M201 124H1245M201 626H1245" stroke="#8c8c8c" strokeWidth="2" />
          <path d="M193.500 621.500h16v8h-16z" fill="none" stroke="#a2a2a2" />
          <path d="M241.500 147.500h168v64h-168z" fill="none" stroke="#686868" />
          <path d="M591.500 344.500h251v60h-251z" fill="#26500f" stroke="#a0a0a0" />
          <path d="M591 405h252" stroke="#808080" strokeWidth="2" />
        </SceneDrawing>
        <SceneText $x={242} $y={147} $w={168} $h={64} $size={56} $color="#1e480b">WILD</SceneText>
        <SceneText $x={592} $y={344} $w={252} $h={61} $size={38} $color="#060806" $center>New Game</SceneText>
        <SceneDrawing>
          <circle cx="715" cy="377" r="5" fill="none" stroke="#3d6d95" strokeWidth="2" />
          <path
            d="M723 375L712 369l5-5zM723 375l6-11 6 5zM723 375l-11 6 5 5zM723 375l6 11 5-5z"
            fill="none" stroke="#d8d8d8" strokeWidth="1.200" strokeLinejoin="round"
          />
          {[589, 842].map(x => [346, 406].map(y => (
            <g key={`${x}-${y}`}>
              <circle cx={x} cy={y} r="4" fill="#2a83ea" stroke="#17304f" />
              <ellipse cx={x} cy={y - 2} rx="2.500" ry="1.200" fill="#9fcbfb" />
            </g>
          )))}
        </SceneDrawing>
      </SceneView>
    </Frame>
  </Dock>
);

const favorites = ['All Materials', 'All Models', 'All Prefabs', 'All Scripts'];

const Project = () => (
  <Dock $h={267}>
    <TabBar>
      <Tab $on><FolderTab />Project</Tab>
      <Tab><ConsoleIcon />Console</Tab>
      <TabTools><Lock /><PanelMenu /></TabTools>
    </TabBar>
    <Frame $right>
      <Toolbar $h={18}>
        <ToolItem $w={54} $first>Create<Caret /></ToolItem>
        <Gap />
        <SearchBox $w={300} $h={14}><SearchIcon /><input aria-label="Search project" /></SearchBox>
        <Gap $w={10} />
        <ToolItem $w={22} aria-label="Search by type"><ShapesIcon /></ToolItem>
        <ToolItem $w={22} aria-label="Search by label"><TagIcon /></ToolItem>
        <ToolItem $w={22} aria-label="Save search"><StarIcon /></ToolItem>
        <ToolItem $w={6} as="span" />
      </Toolbar>
      <ProjectBody>
        <ProjectTree>
          <Tree $top={1}>
            <Node $depth={0} $bold><Fold><Triangle open /></Fold><StarIcon gold /><NodeText $gap={3}>Favorites</NodeText></Node>
            {favorites.map(f => (
              <Node key={f} $depth={1}><Fold /><Magnifier /><NodeText $gap={2}>{f}</NodeText></Node>
            ))}
            <Node $depth={0} $bold $space><Fold><Triangle open /></Fold><Folder /><NodeText $gap={2}>Assets</NodeText></Node>
            <Node $depth={1}><Fold><Triangle /></Fold><Folder /><NodeText $gap={2}>Editor</NodeText></Node>
            <Node $depth={1} $on><Fold /><Folder /><NodeText $gap={2}>Scripts</NodeText></Node>
            <Node $depth={1}><Fold><Triangle /></Fold><Folder /><NodeText $gap={2}>Standard Assets</NodeText></Node>
          </Tree>
        </ProjectTree>
        <ProjectFiles>
          <Breadcrumb>
            Assets
            <svg width="5" height="6" viewBox="0 0 5 6"><path d="M0 0v6l5-3z" fill="#888" /></svg>
            <strong>Scripts</strong>
          </Breadcrumb>
          <FileRow><CSharpIcon />LoadOnClick</FileRow>
          <SizeBar><Slider type="range" aria-label="Icon size" min={0} max={100} defaultValue={0} $w={56} /></SizeBar>
        </ProjectFiles>
      </ProjectBody>
    </Frame>
  </Dock>
);

const targets = ['GameObject', 'RectTransform', 'Canvas', 'CanvasScaler', 'GraphicRaycaster'];

const FunctionMenu = () => (
  <Popup role="menu">
    <PopupItem role="menuitem">
      <PopupTick><svg width="10" height="8" viewBox="0 0 10 8"><path d="M.5 4l3 3 6-6.500" fill="none" stroke="#222" strokeWidth="1.200" /></svg></PopupTick>
      No Function
    </PopupItem>
    <PopupRule />
    {targets.map(t => (
      <PopupItem key={t} role="menuitem">
        <span />
        {t}
        <svg width="5" height="8" viewBox="0 0 5 8"><path d="M.5.5L4 4 .5 7.500" fill="none" stroke="#333" strokeWidth="1.200" /></svg>
      </PopupItem>
    ))}
  </Popup>
);

const SpritePreview = () => (
  <Sprite>
    <svg width="154" height="154" viewBox="0 0 154 154">
      <defs>
        <pattern id="checker" x="-3" y="-3" width="32" height="32" patternUnits="userSpaceOnUse">
          <path d="M0 0h32v32H0z" fill="#fff" /><path d="M16 0h16v16H16zM0 16h16v16H0z" fill="#cbcbcb" />
        </pattern>
        <filter id="soft"><feGaussianBlur stdDeviation="2" /></filter>
      </defs>
      <path d="M0 0h154v154H0z" fill="url(#checker)" />
      <rect x="12" y="12" width="130" height="130" rx="36" fill="#326313" fillOpacity=".86" stroke="#1a2412" strokeWidth="5" filter="url(#soft)" />
      <g stroke="#1d3010"><path d="M47.500 8v140M105.500 8v140M8 49.500h138M8 107.500h138" /></g>
      <g stroke="#c4d3ba" strokeDasharray="9 7"><path d="M47.500 8v140M105.500 8v140M0 49.500h154M0 107.500h154" /></g>
    </svg>
    <SpriteCaption>New Game Button<br />Image Size: 32x32</SpriteCaption>
  </Sprite>
);

const Inspector = () => (
  <Dock>
    <TabBar>
      <Tab $on><InfoIcon />Inspector</Tab>
      <TabTools><Lock /><PanelMenu /></TabTools>
    </TabBar>
    <Frame $left>
      <ObjectHeader>
        <Cube size={22} />
        <ObjectLines>
          <ObjectLine $pad={8}>
            <Check on label="Active" />
            <Gap $w={4} />
            <TextField aria-label="Name" defaultValue="New Game Button" />
            <StaticLabel htmlFor="static"><Check id="static" />Static</StaticLabel>
            <Caret w={8} />
            <Gap $w={2} />
          </ObjectLine>
          <ObjectLine $pad={0}>
            <TagLabel $w={25} htmlFor="tag">Tag</TagLabel>
            <Dropdown id="tag" value="Untagged" w={144} />
            <Gap $w={6} />
            <TagLabel $w={39} htmlFor="layer">Layer</TagLabel>
            <Dropdown id="layer" value="UI" />
          </ObjectLine>
        </ObjectLines>
      </ObjectHeader>

      <Component $pad={2}>
        <Head name="Rect Transform" icon={<TransformIcon />} />
        <RectBody>
          <AnchorPreset>
            <AnchorTop>center</AnchorTop>
            <AnchorSide>middle</AnchorSide>
            <AnchorButton aria-label="Anchor presets">
              <svg width="49" height="49" viewBox="0 0 49 49" fill="none">
                <path d="M.5.5h48v48H.5z" fill="#d0d0d0" stroke="#808080" />
                <path d="M7.500 7.500h34v34h-34z" stroke="#8c8c8c" />
                <path d="M24.500 8v33M8 24.500h33" stroke="#d23c3c" />
                <path d="M16.500 16.500h16v16h-16z" stroke="#222" />
                <path d="M23 23h3v3h-3z" fill="#a0640a" />
              </svg>
            </AnchorButton>
          </AnchorPreset>
          <RectGrid>
            <label htmlFor="px">Pos X</label><label htmlFor="py">Pos Y</label><label htmlFor="pz">Pos Z</label>
            <TextField $w={77} id="px" defaultValue="-7" /><TextField $w={77} id="py" defaultValue="0" /><TextField $w={77} id="pz" defaultValue="0" />
            <label htmlFor="rw">Width</label><label htmlFor="rh">Height</label><span />
            <TextField $w={77} id="rw" defaultValue="321" /><TextField $w={77} id="rh" defaultValue="77" />
            <RectButtons $h={18}>
              <Segment $w={25} aria-label="Blueprint mode">
                <svg width="11" height="11" viewBox="0 0 11 11"><path d="M.5.5h10v10H.5z" fill="none" stroke="#333" strokeDasharray="2 2" /></svg>
              </Segment>
              <Segment $w={25}>R</Segment>
            </RectButtons>
          </RectGrid>
        </RectBody>
        <AnchorsFold><Fold><Triangle /></Fold>Anchors</AnchorsFold>
        <Vector label="Pivot" values={['0.5', '0.5']} />
        <Vector label="Rotation" values={['0', '0', '0']} mt={10} />
        <Vector label="Scale" values={['1', '1', '1']} />
      </Component>

      <Component><Head name="Canvas Renderer" icon={<TargetIcon />} /></Component>

      <Component $pad={2}>
        <Head name="Image (Script)" icon={<ImageIcon />} check />
        <Field id="source" label="Source Image">
          <ObjectField id="source"><SpriteIcon />UISprite</ObjectField>
          <PickButton aria-label="Pick sprite"><PickIcon /></PickButton>
        </Field>
        <ColorField id="color" label="Color" color="#fff" indent={false} />
        <Field id="material" label="Material">
          <ObjectField id="material">None (Material)</ObjectField>
          <PickButton aria-label="Pick material"><PickIcon /></PickButton>
        </Field>
        <Toggle id="raycast" label="Raycast Target" />
        <Field id="type" label="Image Type"><Dropdown id="type" value="Sliced" /></Field>
        <Toggle id="fill" label="Fill Center" indent />
      </Component>

      <Component>
        <Head name="Button (Script)" icon={<OkIcon />} check />
        <Toggle id="interactable" label="Interactable" />
        <Field id="transition" label="Transition"><Dropdown id="transition" value="Color Tint" /></Field>
        <Field id="graphic" label="Target Graphic" indent>
          <ObjectField id="graphic"><ImageIcon size={12} />New Game Button (Image)</ObjectField>
          <PickButton aria-label="Pick graphic"><PickIcon /></PickButton>
        </Field>
        <ColorField id="normal" label="Normal Color" color="#205800" alpha={80} />
        <ColorField id="highlighted" label="Highlighted Color" color="#f5f5f5" />
        <ColorField id="pressed" label="Pressed Color" color="#c8c8c8" />
        <ColorField id="disabled" label="Disabled Color" color="#c8c8c8" alpha={50} />
        <Field id="multiplier" label="Color Multiplier" indent>
          <Slider id="multiplier" type="range" min={1} max={5} defaultValue={1} />
          <Gap $w={1} />
          <TextField $w={50} aria-label="Color Multiplier value" defaultValue="1" />
        </Field>
        <Field id="fade" label="Fade Duration" indent><TextField id="fade" defaultValue="0.1" /></Field>
        <Field id="navigation" label="Navigation" mt={10}><Dropdown id="navigation" value="Automatic" /></Field>
        <Row $mt={4}><span /><RowField><FullButton>Visualize</FullButton></RowField></Row>
        <EventBox>
          <EventTitle>On Click ()</EventTitle>
          <EventBody>
            <Dropdown label="Call state" value="Runtime Only" />
            <PopupAnchor>
              <Dropdown label="Function" value="No Function" dark />
              <FunctionMenu />
            </PopupAnchor>
            <TargetField>
              <Cube size={12} /><span>Canvas</span><PickIcon />
            </TargetField>
          </EventBody>
          <EventFooter>
            <svg width="9" height="9" viewBox="0 0 9 9"><path d="M3.500 0h2v3.500H9v2H5.500V9h-2V5.500H0v-2h3.500z" fill="#333" /></svg>
            <svg width="9" height="2" viewBox="0 0 9 2"><path d="M0 0h9v2H0z" fill="#999" /></svg>
          </EventFooter>
        </EventBox>
      </Component>

      <AddComponent aria-label="Add Component" />

      <PreviewHead>New Game Button<UpDown color="#ddd" /><DragLines /></PreviewHead>
      <Preview><SpritePreview /></Preview>
    </Frame>
  </Dock>
);

const menus = ['File', 'Edit', 'Assets', 'GameObject', 'Component', 'Mobile Input', 'Window', 'Help'];

export default function App() {
  return (
    <Shell>
      <GlobalStyle />
      <TitleBar>
        <FaUnity size={14} color="#222" />
        Unity Personal (64bit) - Main Menu.unity - WILD - PC, Mac &amp; Linux Standalone* &lt;DX11&gt;
        <WindowButtons>
          <WindowButton aria-label="Minimize"><svg width="10" height="10"><path d="M0 5.500h10" stroke="#000" /></svg></WindowButton>
          <WindowButton aria-label="Restore">
            <svg width="10" height="10" fill="none" stroke="#000"><path d="M.5 2.500h7v7h-7zM2.500 2.500v-2h7v7h-2" /></svg>
          </WindowButton>
          <WindowButton aria-label="Close"><svg width="10" height="10"><path d="M0 0l10 10M10 0L0 10" stroke="#000" /></svg></WindowButton>
        </WindowButtons>
      </TitleBar>
      <MenuBar>{menus.map(m => <button key={m}>{m}</button>)}</MenuBar>
      <MainToolbar>
        <ToolGroup>
          <Segments $h={22}>
            <Segment $w={31} aria-label="Hand"><HandIcon /></Segment>
            <Segment $w={32} aria-label="Move"><MoveIcon /></Segment>
            <Segment $w={32} aria-label="Rotate"><RotateIcon /></Segment>
            <Segment $w={32} aria-label="Scale"><ScaleIcon /></Segment>
            <Segment $w={31} $on aria-label="Rect"><RectIcon /></Segment>
          </Segments>
          <HandleModes $h={18}>
            <Segment $w={63}><PivotIcon />Center</Segment>
            <Segment $w={63}><LocalIcon />Local</Segment>
          </HandleModes>
        </ToolGroup>
        <Playback>
          <Segments $h={22}>
            <Segment $w={31} aria-label="Play"><PlayIcon kind="play" /></Segment>
            <Segment $w={32} aria-label="Pause"><PlayIcon kind="pause" /></Segment>
            <Segment $w={31} aria-label="Step"><PlayIcon kind="step" /></Segment>
          </Segments>
        </Playback>
        <RightTools>
          <CloudButton aria-label="Services"><CloudIcon /></CloudButton>
          <MenuButton $gap={20}>Account<Caret w={6} /></MenuButton>
          <MenuButton $gap={10}>Layers<Caret w={6} /></MenuButton>
          <MenuButton>Layout<Caret w={6} /></MenuButton>
        </RightTools>
      </MainToolbar>
      <Workspace>
        <LeftSide>
          <UpperDock><Hierarchy /><Scene /></UpperDock>
          <Project />
        </LeftSide>
        <Inspector />
      </Workspace>
      <StatusBar>
        <ErrorIcon />
        NullReferenceException: Object reference not set to an instance of an object
      </StatusBar>
    </Shell>
  );
}
